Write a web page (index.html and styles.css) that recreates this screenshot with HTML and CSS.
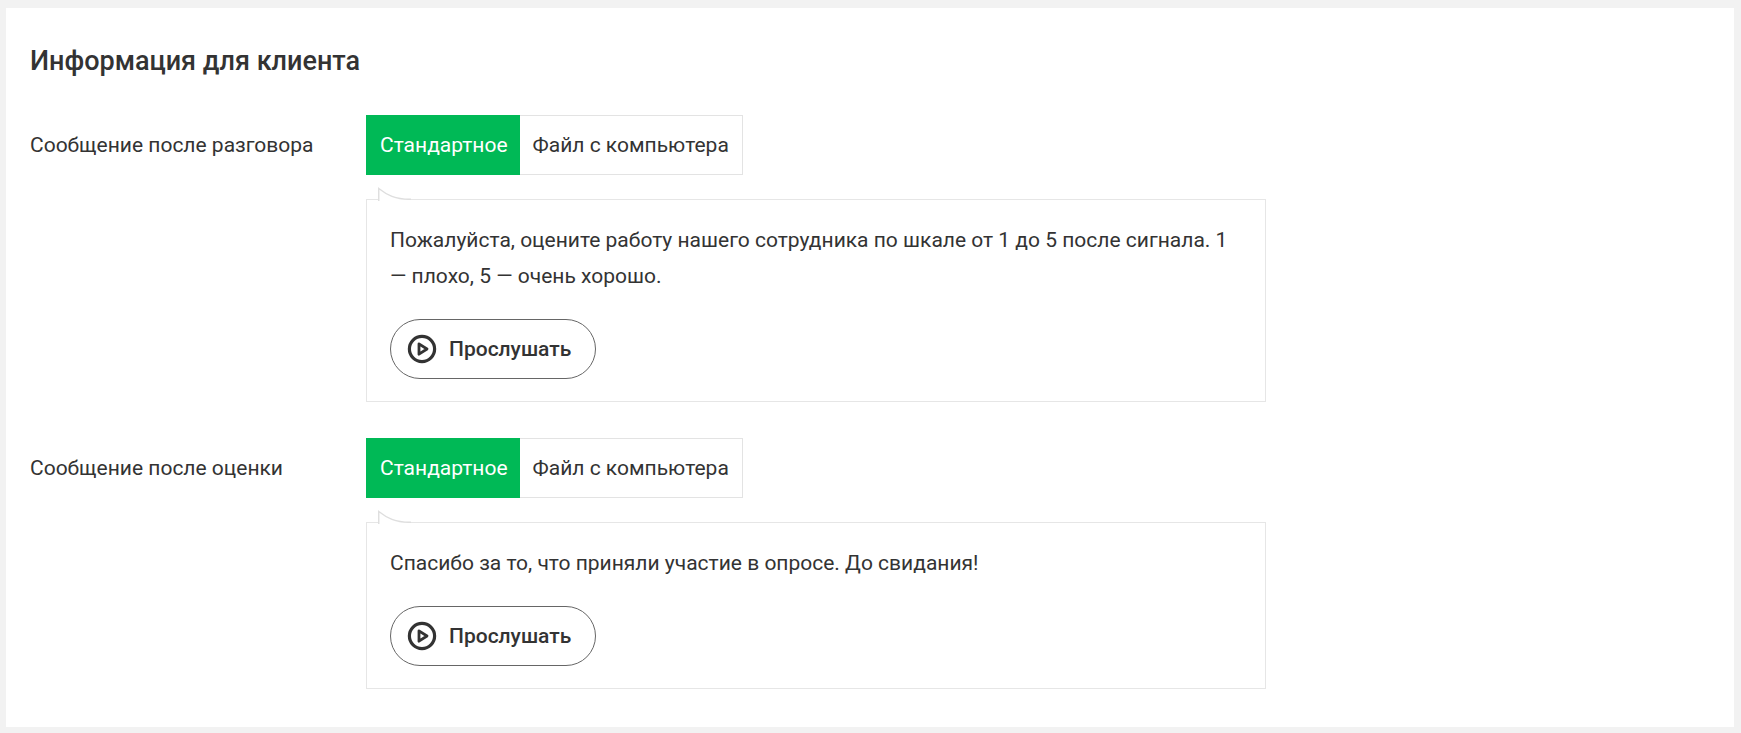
FILE: index.html
```html
<!DOCTYPE html>
<html lang="ru">

<head>
    <meta charset="UTF-8">
    <meta name="viewport" content="width=device-width, initial-scale=1.0">
    <title>Информация для клиента</title>
    <link rel="stylesheet" href="styles.css">
</head>

<body>
    <div class="panel">
        <h2 class="panel-title">Информация для клиента</h2>

        <div class="row">
            <div class="row-label">Сообщение после разговора</div>
            <div class="row-content">
                <div class="tabs">
                    <div class="tab tab-active">Стандартное</div>
                    <div class="tab">Файл с компьютера</div>
                </div>
                <div class="message">
                    <svg class="message-tail" width="33" height="14" viewBox="0 0 33 14">
                        <path d="M0.75 14V1.5C9 8 17 12.5 33 12.25" fill="#fff" stroke="#dedede" stroke-width="1.4" />
                    </svg>
                    <p class="message-text">Пожалуйста, оцените работу нашего сотрудника по шкале от 1 до 5 после сигнала. 1 — плохо, 5 — очень хорошо.</p>
                    <button class="listen-btn">
                        <svg class="play-icon" width="30" height="30" viewBox="0 0 30 30">
                            <circle cx="15" cy="15" r="12.6" fill="none" stroke="#333" stroke-width="3.2" />
                            <path d="M12 9.8L20 15L12 20.2Z" fill="none" stroke="#333" stroke-width="2.8" stroke-linejoin="round" />
                        </svg>
                        Прослушать
                    </button>
                </div>
            </div>
        </div>

        <div class="row">
            <div class="row-label">Сообщение после оценки</div>
            <div class="row-content">
                <div class="tabs">
                    <div class="tab tab-active">Стандартное</div>
                    <div class="tab">Файл с компьютера</div>
                </div>
                <div class="message">
                    <svg class="message-tail" width="33" height="14" viewBox="0 0 33 14">
                        <path d="M0.75 14V1.5C9 8 17 12.5 33 12.25" fill="#fff" stroke="#dedede" stroke-width="1.4" />
                    </svg>
                    <p class="message-text">Спасибо за то, что приняли участие в опросе. До свидания!</p>
                    <button class="listen-btn">
                        <svg class="play-icon" width="30" height="30" viewBox="0 0 30 30">
                            <circle cx="15" cy="15" r="12.6" fill="none" stroke="#333" stroke-width="3.2" />
                            <path d="M12 9.8L20 15L12 20.2Z" fill="none" stroke="#333" stroke-width="2.8" stroke-linejoin="round" />
                        </svg>
                        Прослушать
                    </button>
                </div>
            </div>
        </div>
    </div>
</body>

</html>
```

FILE: styles.css
```css
html,
body {
    height: 100%;
}

body {
    margin: 0;
    padding: 8px 7px 6px 6px;
    box-sizing: border-box;
    background: #f2f2f2;
    color: #333;
    font-family: Roboto, "Liberation Sans", sans-serif;
    font-size: 21px;
    overflow: hidden;
}

.panel {
    height: 100%;
    box-sizing: border-box;
    background: #fff;
    padding: 38px 24px 0;
}

.panel-title {
    margin: 0 0 39px;
    font-size: 27px;
    line-height: 30px;
    font-weight: 500;
}

/* строка: подпись слева, контент справа */
.row {
    display: flex;
    margin-bottom: 36px;
}

.row-label {
    width: 336px;
    flex-shrink: 0;
    line-height: 60px;
}

.row-content {
    width: 900px;
}

/* вкладки */
.tabs {
    display: inline-flex;
    height: 60px;
    box-sizing: border-box;
    border: 1px solid #e3e3e3;
    border-left: 0;
}

.tab {
    padding: 0 13px 0 13px;
    line-height: 58px;
}

.tab-active {
    background: #00b956;
    color: #fff;
    margin: -1px 0;
    line-height: 60px;
    padding: 0 12px 0 14px;
}

/* блок сообщения */
.message {
    position: relative;
    margin-top: 24px;
    padding: 22px 23px 22px;
    border: 1px solid #e6e6e6;
}

.message-tail {
    position: absolute;
    left: 11px;
    top: -13px;
    display: block;
}

.message-text {
    margin: 0 0 25px;
    line-height: 36px;
}

/* кнопка */
.listen-btn {
    display: flex;
    align-items: center;
    gap: 12px;
    width: 206px;
    height: 60px;
    padding: 0 0 0 16px;
    background: #fff;
    border: 1px solid #666;
    border-radius: 30px;
    color: #333;
    font-family: inherit;
    font-size: 21px;
    font-weight: 500;
    cursor: pointer;
}

.play-icon {
    flex-shrink: 0;
}
```
